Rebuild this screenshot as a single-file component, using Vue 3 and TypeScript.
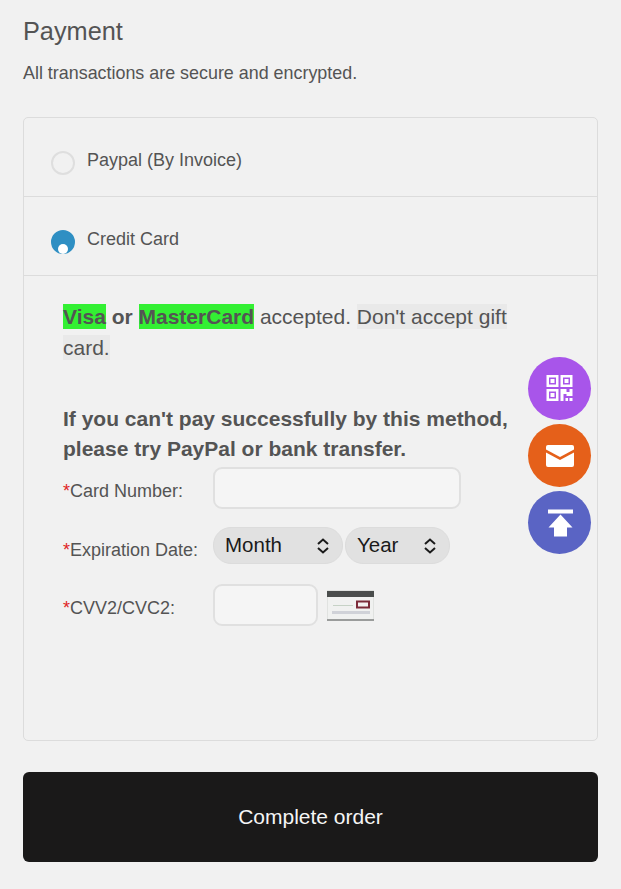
<template>
  <div class="page">
    <h2 class="title">Payment</h2>
    <p class="subtitle">All transactions are secure and encrypted.</p>

    <div class="methods">
      <label v-for="m in methods" :key="m.name" class="method">
        <span class="radio" :class="{ checked: m.checked }"></span>
        <span class="method-name">{{ m.name }}</span>
      </label>

      <div class="card-body">
        <p class="notice">
          <b class="hl">Visa</b> <b>or</b> <b class="hl">MasterCard</b> accepted.
          <span class="soft">Don't accept gift card.</span>
        </p>
        <p class="warning">
          If you can't pay successfully by this method,<br />please try PayPal or bank transfer.
        </p>

        <div class="field field-number">
          <span class="field-label"><i>*</i>Card Number:</span>
          <input class="input input-long" type="text" />
        </div>
        <div class="field field-date">
          <span class="field-label"><i>*</i>Expiration Date:</span>
          <div class="selects">
            <div v-for="s in selects" :key="s.text" class="select" :class="s.cls">
              <span>{{ s.text }}</span>
              <svg width="14" height="16" viewBox="0 0 14 16" fill="none" stroke="#1a1a1a" stroke-width="2">
                <path d="M2 6 L7 1.5 L12 6" />
                <path d="M2 10 L7 14.5 L12 10" />
              </svg>
            </div>
          </div>
        </div>
        <div class="field field-cvv">
          <span class="field-label"><i>*</i>CVV2/CVC2:</span>
          <input class="input input-short" type="text" />
          <svg class="cvv-pic" width="47" height="31" viewBox="0 0 47 31">
            <rect width="47" height="31" fill="#e0e2e0" />
            <rect x="1" y="1" width="45" height="29" fill="#f0f1f0" />
            <rect y="1" width="47" height="6" fill="#4a4d4c" />
            <rect x="30" y="11.500" width="12" height="6" fill="#f4f0f0" stroke="#7c2a38" stroke-width="2" />
            <rect x="6" y="15" width="20" height="1" fill="#c6d2c6" />
            <rect x="5" y="21" width="38" height="3" fill="#d0d2d8" />
            <rect y="29" width="47" height="2" fill="#9a9c9b" />
          </svg>
        </div>
      </div>
    </div>

    <button class="submit" type="button">Complete order</button>

    <div class="float-btns">
      <div class="float-btn purple">
        <svg width="28" height="28" viewBox="0.5 1 28 28" fill="#fff" fill-rule="evenodd">
          <path d="M1 1h12v12H1z M3.500 3.500v7h7v-7z M5 5h4v4H5z" />
          <path d="M15 1h12v12H15z M17.500 3.500v7h7v-7z M19 5h4v4h-4z" />
          <path d="M1 15h12v12H1z M3.500 17.500v7h7v-7z M5 19h4v4H5z" />
          <path d="M15 15h6v3h3v-3h3v7h-6v-2h-3v7h-3z" />
          <path d="M20 24h2.500v3H20z M24 24h3v3h-3z" />
        </svg>
      </div>
      <div class="float-btn orange">
        <svg width="28" height="22" viewBox="0 0 28 22" fill="#fff">
          <path d="M2 0h24a2 2 0 0 1 2 2v2.500L14 12 0 4.500V2a2 2 0 0 1 2-2z" />
          <path d="M0 7.500 14 15 28 7.500V20a2 2 0 0 1-2 2H2a2 2 0 0 1-2-2z" />
        </svg>
      </div>
      <div class="float-btn blue">
        <svg width="26" height="28" viewBox="0 0 26 28" fill="#fff">
          <rect x="1" y="0.500" width="25" height="4" />
          <path d="M13.500 5.500 25.500 18.500h-5.500V27.500H7V18.500H1.500z" />
        </svg>
      </div>
    </div>
  </div>
</template>

<script setup lang="ts">
const methods = [
  { name: 'Paypal (By Invoice)', checked: false },
  { name: 'Credit Card', checked: true },
]

const selects = [
  { text: 'Month', cls: 'select-month' },
  { text: 'Year', cls: 'select-year' },
]
</script>

<style>
html,
body {
  background: #f1f1f1;
}
</style>

<style scoped>
.page {
  position: relative;
  height: 889px;
  box-sizing: border-box;
  padding: 0 23px;
  overflow: hidden;
  background: #f1f1f1;
  color: #545454;
  font-family: 'Liberation Sans', Arial, sans-serif;
}
.title {
  margin: 0;
  padding-top: 17px;
  font-size: 25.300px;
  line-height: 28px;
  font-weight: 400;
}
.subtitle {
  margin: 14px 0 0;
  font-size: 17.900px;
  line-height: 28px;
}
.methods {
  margin-top: 30px;
  height: 624px;
  box-sizing: border-box;
  border: 1px solid #dcdcdc;
  border-radius: 5px;
}
.method {
  display: flex;
  align-items: center;
  height: 79px;
  box-sizing: border-box;
  padding-left: 27px;
  border-bottom: 1px solid #dcdcdc;
  font-size: 18px;
}
.method-name {
  margin: 6px 0 0 12px;
}
.radio {
  position: relative;
  width: 24px;
  height: 24px;
  box-sizing: border-box;
  border: 2px solid #dedede;
  border-radius: 50%;
  margin-top: 12px;
}
.radio.checked {
  background: #2f8fc3;
  border-color: #2f8fc3;
}
.radio.checked::after {
  content: '';
  position: absolute;
  left: 5px;
  top: 12px;
  width: 10px;
  height: 10px;
  border-radius: 50%;
  background: #fff;
}
.card-body {
  padding: 25px 0 0 39px;
}
.notice {
  margin: 0;
  width: 460px;
  font-size: 21px;
  line-height: 31px;
}
.hl {
  padding: 1px 0;
  background: #33f033;
}
.soft {
  padding: 1px 0;
  background: #e9e9e9;
}
.warning {
  margin: 41px 0 0;
  font-size: 21px;
  line-height: 30px;
  font-weight: 700;
  white-space: nowrap;
}
.field {
  display: flex;
  align-items: center;
}
.field-number {
  margin-top: 3px;
}
.field-date {
  margin-top: 18px;
}
.field-cvv {
  margin-top: 20px;
}
.field-label {
  width: 150px;
  flex: none;
  margin-top: 7px;
  font-size: 18px;
}
.field-date .field-label {
  margin-top: 10px;
}
.field-cvv .field-label {
  margin-top: 6px;
}
.field-label i {
  color: #e02424;
  font-style: normal;
}
.input {
  height: 42px;
  box-sizing: border-box;
  padding: 0 8px;
  border: 2px solid #e0e0e0;
  border-radius: 9px;
  background: #f5f5f5;
  outline: none;
}
.input-long {
  width: 248px;
}
.input-short {
  width: 105px;
}
.cvv-pic {
  margin-left: 9px;
  filter: blur(0.6px);
}
.selects {
  display: flex;
  gap: 2px;
}
.select {
  display: flex;
  align-items: center;
  justify-content: space-between;
  height: 37px;
  box-sizing: border-box;
  padding: 0 12px 0 11px;
  border: 1px solid #dcdcdc;
  border-radius: 18px;
  background: #e1e1e1;
  color: #1a1a1a;
  font-size: 20.500px;
}
.select span {
  margin-top: -2px;
}
.select-month {
  width: 130px;
}
.select-year {
  width: 105px;
}
.submit {
  display: block;
  width: 575px;
  height: 90px;
  margin-top: 31px;
  border: none;
  border-radius: 6px;
  background: #1a1919;
  color: #f5f5f5;
  font-family: inherit;
  font-size: 21px;
}
.float-btns {
  position: absolute;
  left: 528px;
  top: 357px;
  display: flex;
  flex-direction: column;
  gap: 4px;
}
.float-btn {
  display: flex;
  align-items: center;
  justify-content: center;
  width: 63px;
  height: 63px;
  border-radius: 50%;
}
.purple {
  background: #a855ea;
}
.orange {
  background: #e5601a;
}
.blue {
  background: #5a64c4;
}
</style>
